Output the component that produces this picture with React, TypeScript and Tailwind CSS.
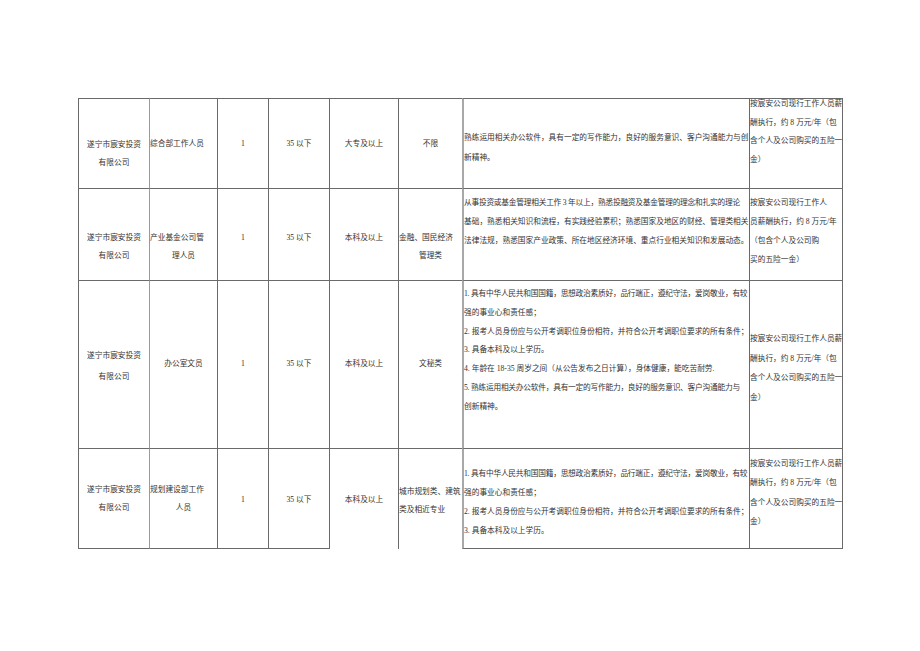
import clsx from 'clsx';

type Line = { t: string; c?: boolean; tight?: boolean };
type Cell = {
  lines: Line[];
  pad: string;
  lead: string;
  center?: boolean;
  cls?: string;
};

const FONT = "font-['Liberation_Serif','Noto_Sans_CJK_SC',serif]";

const company = (pad: string, lead: string): Cell => ({
  lines: [{ t: '遂宁市宸安投资' }, { t: '有限公司' }],
  pad,
  lead,
  center: true,
});

const one = (t: string, pad: string): Cell => ({ lines: [{ t }], pad, lead: 'leading-[18.6px]', center: true });

const salaryFull = (pad: string, lead: string): Cell => ({
  lines: [
    { t: '按宸安公司现行工作人员薪' },
    { t: '酬执行，约 8 万元/年（包' },
    { t: '含个人及公司购买的五险一' },
    { t: '金）' },
  ],
  pad,
  lead,
});

const rows: Cell[][] = [
  [
    company('pt-[37px]', 'leading-[18px]'),
    { lines: [{ t: '综合部工作人员' }], pad: 'pt-[36px]', lead: 'leading-[18.6px]' },
    one('1', 'pt-[36px]'),
    one('35 以下', 'pt-[36px]'),
    one('大专及以上', 'pt-[36px]'),
    one('不限', 'pt-[36px]'),
    {
      lines: [{ t: '熟练运用相关办公软件，具有一定的写作能力，良好的服务意识、客户沟通能力与创' }, { t: '新精神。' }],
      pad: 'pt-[29px]',
      lead: 'leading-[20px]',
    },
    salaryFull('-mt-[4px]', 'leading-[18.7px]'),
  ],
  [
    company('pt-[40px]', 'leading-[18px]'),
    { lines: [{ t: '产业基金公司管' }, { t: '理人员', c: true }], pad: 'pt-[40px]', lead: 'leading-[18px]' },
    one('1', 'pt-[40px]'),
    one('35 以下', 'pt-[40px]'),
    one('本科及以上', 'pt-[40px]'),
    { lines: [{ t: '金融、国民经济' }, { t: '管理类', c: true }], pad: 'pt-[40px]', lead: 'leading-[18px]' },
    {
      lines: [
        { t: '从事投资或基金管理相关工作 3 年以上，熟悉投融资及基金管理的理念和扎实的理论', tight: true },
        { t: '基础，熟悉相关知识和流程，有实践经验累积；熟悉国家及地区的财经、管理类相关' },
        { t: '法律法规，熟悉国家产业政策、所在地区经济环境、重点行业相关知识和发展动态。' },
      ],
      pad: 'pt-[4px]',
      lead: 'leading-[19px]',
    },
    {
      lines: [
        { t: '按宸安公司现行工作人' },
        { t: '员薪酬执行，约 8 万元/年' },
        { t: '（包含个人及公司购' },
        { t: '买的五险一金）' },
      ],
      pad: 'pt-[4px]',
      lead: 'leading-[19px]',
    },
  ],
  [
    company('pt-[64px]', 'leading-[21px]'),
    one('办公室文员', 'pt-[74px]'),
    one('1', 'pt-[74px]'),
    one('35 以下', 'pt-[74px]'),
    one('本科及以上', 'pt-[74px]'),
    one('文秘类', 'pt-[74px]'),
    {
      lines: [
        { t: '1. 具有中华人民共和国国籍，思想政治素质好，品行端正，遵纪守法，爱岗敬业，有较', tight: true },
        { t: '强的事业心和责任感；' },
        { t: '2. 报考人员身份应与公开考调职位身份相符，并符合公开考调职位要求的所有条件；' },
        { t: '3. 具备本科及以上学历。' },
        { t: '4. 年龄在 18-35 周岁之间（从公告发布之日计算），身体健康，能吃苦耐劳.' },
        { t: '5. 熟练运用相关办公软件，具有一定的写作能力，良好的服务意识、客户沟通能力与', tight: true },
        { t: '创新精神。' },
      ],
      pad: 'pt-[4px]',
      lead: 'leading-[18.8px]',
    },
    salaryFull('pt-[48px]', 'leading-[19.5px]'),
  ],
  [
    company('pt-[32px]', 'leading-[18px]'),
    { lines: [{ t: '规划建设部工作' }, { t: '人员', c: true }], pad: 'pt-[32px]', lead: 'leading-[18px]' },
    one('1', 'pt-[42px]'),
    one('35 以下', 'pt-[42px]'),
    { ...one('本科及以上', 'pt-[42px]'), cls: 'border-b-0' },
    {
      lines: [{ t: '城市规划类、建筑' }, { t: '类及相近专业' }],
      pad: 'pt-[34px]',
      lead: 'leading-[18px]',
      cls: 'border-b-0',
    },
    {
      lines: [
        { t: '1. 具有中华人民共和国国籍，思想政治素质好，品行端正，遵纪守法，爱岗敬业，有较', tight: true },
        { t: '强的事业心和责任感；' },
        { t: '2. 报考人员身份应与公开考调职位身份相符，并符合公开考调职位要求的所有条件；' },
        { t: '3. 具备本科及以上学历。' },
      ],
      pad: 'pt-[15px]',
      lead: 'leading-[19px]',
    },
    salaryFull('pt-[5px]', 'leading-[19.3px]'),
  ],
];

function TableCell({ cell, col, last }: { cell: Cell; col: number; last: boolean }) {
  return (
    <div
      className={clsx(
        'border-l border-t border-[#6a6a6a] whitespace-nowrap',
        col === 1 && 'border-l-[#9a9a9a]',
        col === 6 && 'border-l-2 border-l-[#a8a8a8]',
        col === 7 && 'border-r',
        last && 'border-b',
        cell.cls,
      )}
    >
      <div className={clsx(cell.pad, cell.lead)}>
        {cell.lines.map((l, i) => (
          <div
            key={i}
            className={clsx(cell.center || l.c ? 'text-center' : 'text-left', l.tight && 'tracking-[-0.22px]')}
          >
            {l.t}
          </div>
        ))}
      </div>
    </div>
  );
}

export default function App() {
  return (
    <div className={clsx('min-h-[651px] w-[920px] bg-white pl-[78px] pt-[98px] text-[7.7px] text-[#333]', FONT)}>
      <div className="grid w-[765px] grid-cols-[71px_68px_51px_61px_69px_64px_287px_94px] grid-rows-[90px_92px_168px_101px]">
        {rows.map((r, ri) =>
          r.map((cell, ci) => <TableCell key={`${ri}-${ci}`} cell={cell} col={ci} last={ri === rows.length - 1} />),
        )}
      </div>
    </div>
  );
}
